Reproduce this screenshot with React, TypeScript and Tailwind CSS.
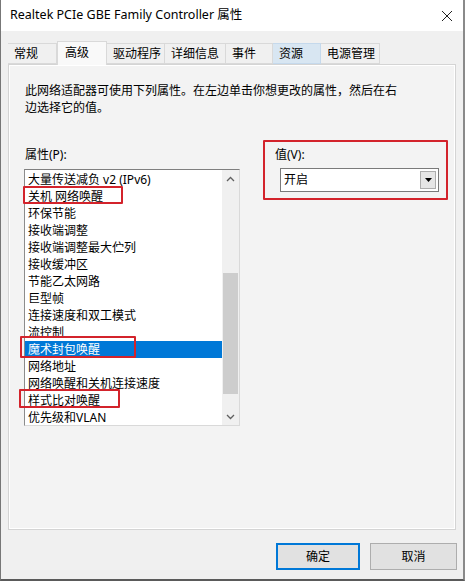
import React from 'react'

const font = { fontFamily: '"Noto Sans", "Noto Sans CJK SC", sans-serif' }

const tabs = [
  { label: '常规', w: 'w-[49px]' },
  { label: '高级', w: 'w-[50px]', active: true },
  { label: '驱动程序', w: 'w-[58px]' },
  { label: '详细信息', w: 'w-[61px]' },
  { label: '事件', w: 'w-[47px]' },
  { label: '资源', w: 'w-[48px]', hover: true },
  { label: '电源管理', w: 'w-[59px]' },
]

const items = [
  '大量传送减负 v2 (IPv6)',
  '关机 网络唤醒',
  '环保节能',
  '接收端调整',
  '接收端调整最大伫列',
  '接收缓冲区',
  '节能乙太网路',
  '巨型帧',
  '连接速度和双工模式',
  '流控制',
  '魔术封包唤醒',
  '网络地址',
  '网络唤醒和关机连接速度',
  '样式比对唤醒',
  '优先级和VLAN',
]

const Chevron = ({ up }: { up?: boolean }) => (
  <svg width="9" height="6" viewBox="0 0 9 6" className="block">
    <polyline
      points={up ? '1,5 4.5,1.5 8,5' : '1,1 4.5,4.5 8,1'}
      fill="none"
      stroke="#606060"
      strokeWidth="1.3"
    />
  </svg>
)

export default function App() {
  return (
    <div
      style={font}
      className="relative w-[465px] h-[581px] bg-[#f0f0f0] border-l border-r-2 border-b-2 border-l-[#777] border-r-[#8a8a8a] border-b-[#5a5a5a] flex flex-col text-black overflow-hidden"
    >
      {/* title bar */}
      <div className="h-[31px] bg-white flex items-center justify-between pl-[9px] pr-[10px] shrink-0">
        <span className="text-[12.5px] leading-none">Realtek PCIe GBE Family Controller 属性</span>
        <svg width="12" height="12" viewBox="0 0 12 12">
          <path d="M1 1 L11 11 M11 1 L1 11" stroke="#222" strokeWidth="1" />
        </svg>
      </div>

      {/* tabs */}
      <div className="mt-[10px] ml-[7px] flex items-end h-[23px] relative z-10">
        {tabs.map((t) => (
          <div
            key={t.label}
            className={
              t.active
                ? `${t.w} h-[24px] -mb-px bg-[#f9f9f9] border border-b-0 border-[#d9d9d9] pl-[7px] pt-[2px] text-[12px] leading-[17px]`
                : t.hover
                  ? `${t.w} h-[21px] bg-[#d8e6f2] border border-l-0 border-[#c5d9ec] pl-[6px] pt-[1px] text-[12px] leading-[17px]`
                  : `${t.w} h-[21px] bg-[#f0f0f0] border border-l-0 border-[#d9d9d9] pl-[6px] pt-[1px] text-[12px] leading-[17px]`
            }
          >
            {t.label}
          </div>
        ))}
      </div>

      {/* panel */}
      <div className="ml-[7px] w-[448px] h-[466px] border border-[#d4d4d4] bg-[#f3f3f3] shrink-0">
        <div className="h-full border border-white pt-[16px]">
          <p className="pl-[15px] text-[12px] leading-[17px] w-[392px]">
            此网络适配器可使用下列属性。在左边单击你想更改的属性，然后在右边选择它的值。
          </p>

          <div className="mt-[30px] flex">
            {/* properties */}
            <div className="ml-[14px] w-[216px]">
              <p className="pl-[1px] text-[12px] leading-[17px]">属性(P):</p>
              <div className="mt-[6px] h-[257px] flex bg-white border border-t-[#7f7f7f] border-l-[#8c8c8c] border-r-[#d9d9d9] border-b-[#d9d9d9]">
                <ul className="flex-1 pt-[1px]">
                  {items.map((it) => (
                    <li
                      key={it}
                      className={
                        it === '魔术封包唤醒'
                          ? 'h-[17px] leading-[17px] pl-[3px] text-[12px] bg-[#0078d7] text-white whitespace-nowrap'
                          : 'h-[17px] leading-[17px] pl-[3px] text-[12px] whitespace-nowrap'
                      }
                    >
                      {it}
                    </li>
                  ))}
                </ul>
                <div className="w-[17px] bg-[#f0f0f0] flex flex-col items-center">
                  <div className="h-[17px] flex items-center justify-center">
                    <Chevron up />
                  </div>
                  <div className="flex-1 w-full px-[1px] pt-[86px] pb-[14px]">
                    <div className="h-full bg-[#cdcdcd]" />
                  </div>
                  <div className="h-[17px] flex items-center justify-center">
                    <Chevron />
                  </div>
                </div>
              </div>
            </div>

            {/* value */}
            <div className="ml-[35px] w-[164px]">
              <p className="text-[12px] leading-[17px]">值(V):</p>
              <div className="mt-[5px] ml-[5px] w-[159px] h-[24px] bg-white border border-[#7a7a7a] flex items-center">
                <span className="flex-1 pl-[3px] text-[12px] leading-none">开启</span>
                <div className="w-[16px] h-[18px] mr-[2px] bg-[#e6e6e6] border border-[#adadad] flex items-center justify-center">
                  <svg width="7" height="4" viewBox="0 0 7 4">
                    <path d="M0 0 H7 L3.5 4 Z" fill="#000" />
                  </svg>
                </div>
              </div>
            </div>
          </div>
        </div>
      </div>

      {/* buttons */}
      <div className="mt-[13px] flex justify-end gap-[10px] pr-[6px]">
        <button className="w-[84px] h-[27px] bg-[#e1e1e1] border-2 border-[#0078d7] text-[12px]">确定</button>
        <button className="w-[87px] h-[27px] bg-[#e1e1e1] border border-[#adadad] text-[12px]">取消</button>
      </div>

      {/* annotation boxes */}
      <div className="absolute left-[22px] top-[186px] w-[100px] h-[18px] border-2 border-[#d3232b] rounded-[1px]" />
      <div className="absolute left-[19px] top-[336px] w-[116px] h-[22px] border-2 border-[#d3232b] rounded-[1px]" />
      <div className="absolute left-[18px] top-[389px] w-[101px] h-[19px] border-2 border-[#d3232b] rounded-[1px]" />
      <div className="absolute left-[262px] top-[140px] w-[185px] h-[60px] border-2 border-[#d3232b] rounded-[1px]" />
    </div>
  )
}
